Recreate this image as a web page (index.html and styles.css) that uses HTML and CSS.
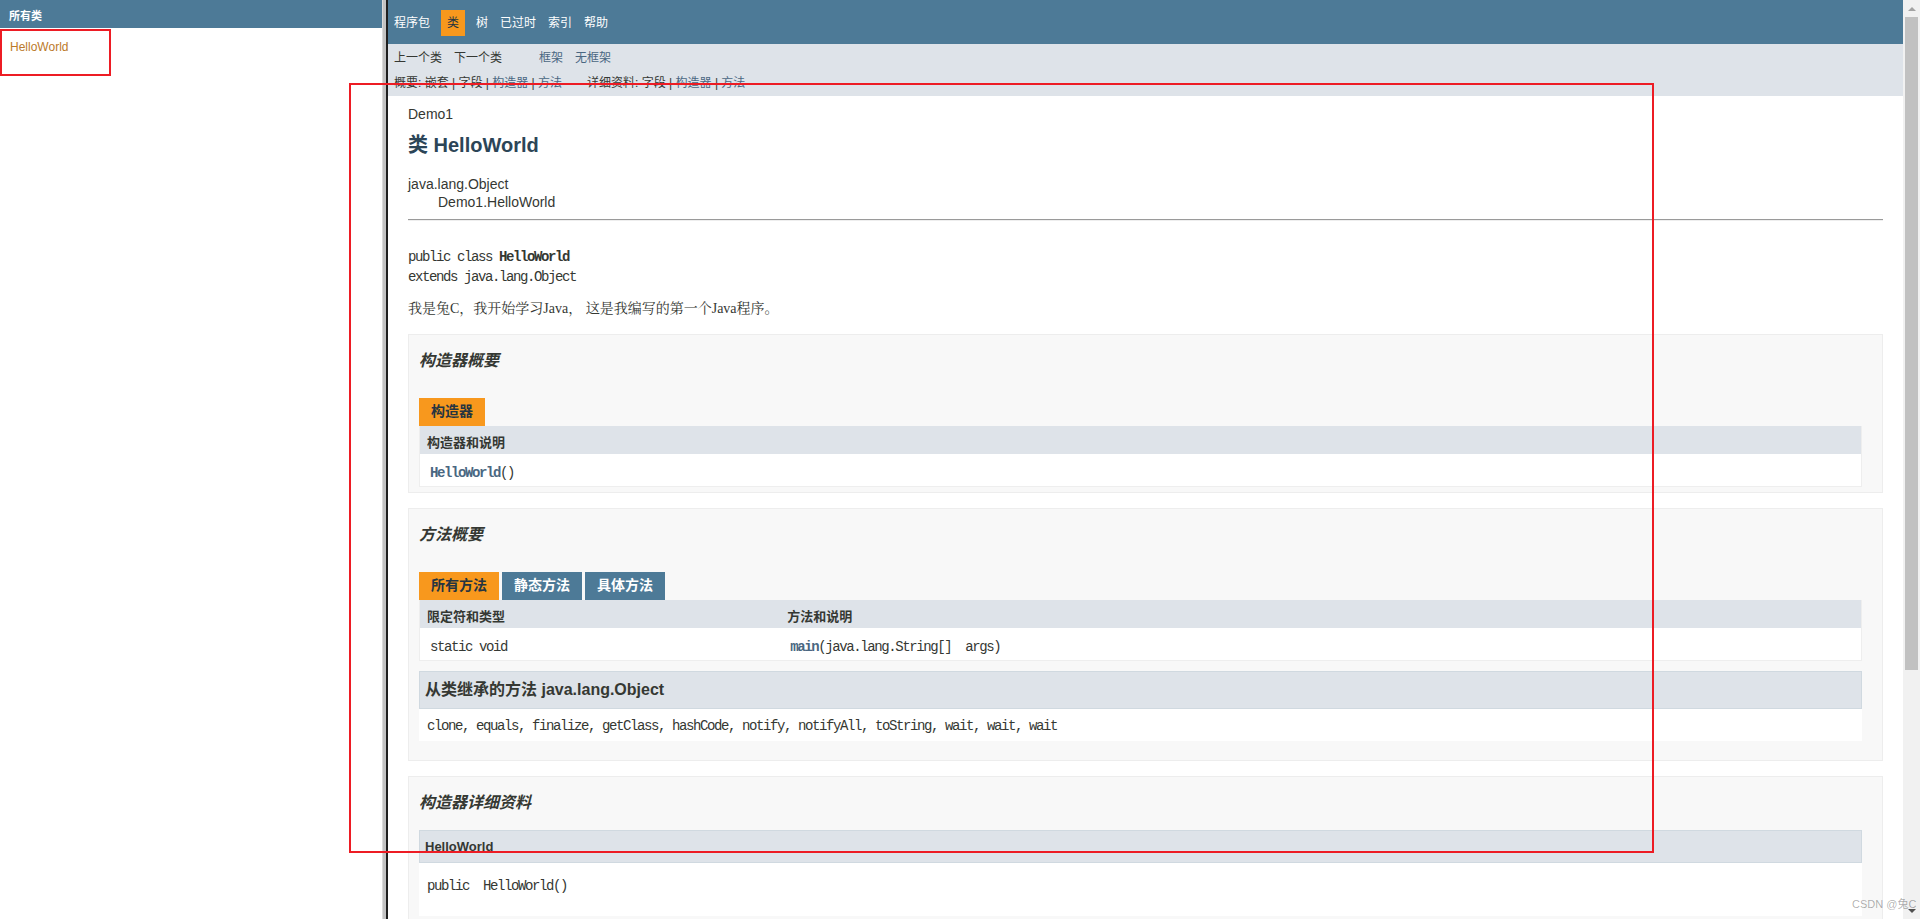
FILE: index.html
```html
<!DOCTYPE html>
<html lang="zh-CN">
<head>
<meta charset="utf-8">
<title>HelloWorld</title>
<link rel="stylesheet" href="styles.css">
</head>
<body>
<div class="screen">
  <aside class="left-frame">
    <h1 class="bar">所有类</h1>
    <ul class="class-list">
      <li><a class="class-link" href="#">HelloWorld</a></li>
    </ul>
  </aside>
  <div class="frame-border"></div>
  <div class="right-frame">
    <main class="doc">
      <nav class="top-nav">
        <ul class="nav-list">
          <li>程序包</li>
          <li class="current">类</li>
          <li>树</li>
          <li>已过时</li>
          <li>索引</li>
          <li>帮助</li>
        </ul>
      </nav>
      <div class="sub-nav">
        <div class="sub-row">
          <ul class="nav-group"><li>上一个类</li><li>下一个类</li></ul>
          <ul class="nav-group"><li><a class="link" href="#">框架</a></li><li><a class="link" href="#">无框架</a></li></ul>
        </div>
        <div class="sub-row2">
          <span>概要:&nbsp;嵌套&nbsp;|&nbsp;字段&nbsp;|&nbsp;<a class="link" href="#">构造器</a>&nbsp;|&nbsp;<a class="link" href="#">方法</a></span>
          <span>详细资料:&nbsp;字段&nbsp;|&nbsp;<a class="link" href="#">构造器</a>&nbsp;|&nbsp;<a class="link" href="#">方法</a></span>
        </div>
      </div>
      <div class="header">
        <div class="sub-title">Demo1</div>
        <h2 class="title">类 HelloWorld</h2>
      </div>
      <div class="content">
        <ul class="inheritance">
          <li>java.lang.Object</li>
          <li class="inherit-child">Demo1.HelloWorld</li>
        </ul>
        <hr class="rule">
        <pre class="signature">public class <b>HelloWorld</b>
extends java.lang.Object</pre>
        <p class="block">我是兔C，我开始学习Java， 这是我编写的第一个Java程序。</p>

        <section class="summary-box">
          <h3 class="box-title">构造器概要</h3>
          <div class="tabs"><span class="tab">构造器</span></div>
          <table class="member-table">
            <tr><th>构造器和说明</th></tr>
            <tr><td><code><a class="member-link" href="#">HelloWorld</a>()</code></td></tr>
          </table>
        </section>

        <section class="summary-box">
          <h3 class="box-title">方法概要</h3>
          <div class="tabs"><span class="tab">所有方法</span><span class="tab tab-off">静态方法</span><span class="tab tab-off">具体方法</span></div>
          <table class="member-table">
            <tr><th class="col-first">限定符和类型</th><th>方法和说明</th></tr>
            <tr><td class="col-first"><code>static void</code></td><td><code><a class="member-link" href="#">main</a>(java.lang.String[]  args)</code></td></tr>
          </table>
          <div class="inherited">
            <h3 class="inherited-title">从类继承的方法 java.lang.Object</h3>
            <code class="inherited-list">clone, equals, finalize, getClass, hashCode, notify, notifyAll, toString, wait, wait, wait</code>
          </div>
        </section>

        <section class="summary-box">
          <h3 class="box-title">构造器详细资料</h3>
          <div class="detail">
            <h4 class="detail-title">HelloWorld</h4>
            <pre class="detail-sig">public  HelloWorld()</pre>
          </div>
        </section>
      </div>
    </main>
    <div class="scrollbar">
      <div class="sb-arrow"><span class="tri-up"></span></div>
      <div class="sb-thumb"></div>
      <div class="sb-space"></div>
      <div class="sb-arrow"><span class="tri-down"></span></div>
    </div>
  </div>
  <div class="mark mark-a"></div>
  <div class="mark mark-b"></div>
  <div class="watermark">CSDN @兔C</div>
</div>
</body>
</html>
```

FILE: styles.css
```css
* { box-sizing: border-box; }
html, body { margin: 0; height: 100%; }
body {
  overflow: hidden;
  background: #fff;
  color: #353833;
  font-family: "Liberation Sans", "Noto Sans CJK SC", sans-serif;
  font-size: 14px;
}
a { text-decoration: none; }

.screen {
  position: relative;
  display: flex;
  width: 1920px;
  height: 919px;
  overflow: hidden;
}

/* left frame */
.left-frame { flex: 0 0 382px; background: #fff; }
.bar {
  margin: 0;
  height: 28px;
  padding: 9px 6px 4px 9px;
  background: #4D7A97;
  color: #fff;
  font-size: 11px;
  font-weight: bold;
  line-height: 15px;
}
.class-list {
  list-style: none;
  margin: 11px 0 0 10px;
  padding: 0;
  font-size: 12px;
  line-height: 16px;
}
.class-link { color: #bb7a2a; }

.frame-border {
  flex: 0 0 6px;
  background: linear-gradient(to right, #dadada 0, #dadada 1px, #c3c3c3 1px, #c3c3c3 4px, #1f1f1f 4px, #1f1f1f 6px);
}

/* right frame */
.right-frame { flex: 1 1 auto; display: flex; min-width: 0; }
.doc { flex: 1 1 auto; min-width: 0; overflow: hidden; }

.top-nav {
  height: 44px;
  padding-top: 10px;
  background: #4D7A97;
  font-size: 12px;
}
.nav-list { display: flex; list-style: none; margin: 0; padding: 0; }
.nav-list li { padding: 5px 6px; line-height: 16px; color: #fff; }
.nav-list li.current { margin: 0 5px; background: #F8981D; color: #253441; }

.sub-nav { height: 52px; background: #dee3e9; font-size: 12px; }
.sub-row { display: flex; }
.nav-group { display: flex; list-style: none; margin: 0 25px 0 0; padding: 0; }
.nav-group li { padding: 6px 6px 4px; line-height: 16px; }
.sub-row2 { display: flex; gap: 25px; padding: 5px 0 5px 6px; line-height: 16px; }
.link { color: #4A6782; }

.header { margin: 0 20px; padding-top: 5px; }
.sub-title { margin-top: 5px; line-height: 16px; }
.title {
  margin: 12px 0 9px;
  font-size: 20px;
  line-height: 23px;
  font-weight: bold;
  color: #2c4557;
}

.content { padding: 10px 20px; }
.inheritance { list-style: none; margin: 0; padding: 0; line-height: 16px; }
.inherit-child { margin-top: 2px; padding-left: 30px; }
.rule {
  height: 0;
  margin: 9px 0 0;
  border: 0;
  border-top: 1px solid #9a9a9a;
  border-bottom: 1px solid #eeeeee;
}

.signature, code, .detail-sig {
  font-family: "Liberation Mono", monospace;
  font-size: 14px;
  letter-spacing: -1.4px;
}
.signature { margin: 26px 0 0; line-height: 20px; }
.signature b { color: #353833; }
.block {
  margin: 12px 0 0;
  font-family: "Liberation Serif", "Noto Serif CJK SC", "Noto Sans CJK SC", serif;
  font-size: 14px;
  line-height: 20px;
}

.summary-box {
  margin-top: 15px;
  padding: 0 20px 5px 10px;
  background: #f8f8f8;
  border: 1px solid #ededed;
}
.box-title {
  margin: 15px 0 0;
  font-size: 16px;
  font-style: italic;
  font-weight: bold;
  line-height: 22px;
}
.tabs { display: flex; gap: 3px; padding-top: 26px; }
.tab {
  height: 28px;
  padding: 5px 12px 7px;
  background: #F8981D;
  color: #253441;
  font-size: 14px;
  font-weight: bold;
  line-height: 16px;
  white-space: nowrap;
}
.tab-off { background: #4D7A97; color: #fff; }

.member-table {
  width: 100%;
  border-collapse: separate;
  border-spacing: 0;
  border: 1px solid #eeeeee;
  border-top: 0;
  background: #fff;
}
.member-table th {
  padding: 8px 3px 3px 7px;
  background: #dee3e9;
  text-align: left;
  font-size: 13px;
  line-height: 17px;
  font-weight: bold;
}
.member-table td {
  padding: 9px 0 3px 10px;
  vertical-align: top;
  font-size: 13px;
  line-height: 19px;
  white-space: pre;
}
.col-first { width: 25%; }
.member-link { color: #4A6782; font-weight: bold; }

.inherited { margin: 10px 0 14px; padding: 0 0 5px 8px; background: #fff; }
.inherited-title {
  margin: 0 0 6px -8px;
  padding: 7px 5px;
  background: #dee3e9;
  border: 1px solid #d0d9e0;
  font-size: 16px;
  font-weight: bold;
  line-height: 22px;
}
.inherited-list { display: block; padding-top: 1px; line-height: 20px; }

.box-title + .detail { margin-top: 16px; }
.detail { padding: 0 0 21px 8px; background: #fff; }
.detail-title {
  margin: 0 0 0 -8px;
  padding: 7px 5px;
  background: #dee3e9;
  border: 1px solid #d0d9e0;
  font-size: 13px;
  font-weight: bold;
  line-height: 17px;
}
.detail-sig { margin: 14px 0 0; line-height: 18px; }

/* scrollbar */
.scrollbar {
  flex: 0 0 17px;
  display: flex;
  flex-direction: column;
  background: #f1f1f1;
}
.sb-arrow { flex: 0 0 17px; display: flex; align-items: center; justify-content: center; }
.tri-up {
  width: 0; height: 0;
  border-left: 4px solid transparent;
  border-right: 4px solid transparent;
  border-bottom: 4px solid #a3a3a3;
}
.tri-down {
  width: 0; height: 0;
  border-left: 4px solid transparent;
  border-right: 4px solid transparent;
  border-top: 4px solid #505050;
}
.sb-thumb { flex: 0 0 653px; margin: 0 2px; background: #c1c1c1; }
.sb-space { flex: 1 1 auto; }

/* annotations */
.mark { position: absolute; border: 2px solid #ed1c24; pointer-events: none; }
.mark-a { left: 0; top: 29px; width: 111px; height: 47px; }
.mark-b { left: 349px; top: 83px; width: 1305px; height: 770px; }
.watermark {
  position: absolute;
  left: 1852px;
  top: 897px;
  font-size: 11px;
  line-height: 14px;
  color: rgba(0, 0, 0, 0.32);
  white-space: nowrap;
}
```
